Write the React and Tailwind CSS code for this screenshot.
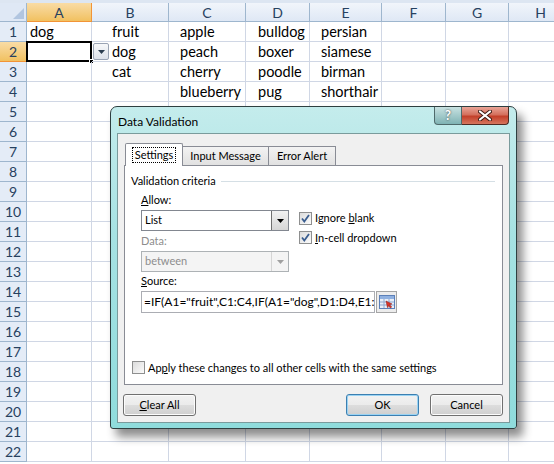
import React from "react";

const cols = [
  { label: "A", w: 65, pad: 3 },
  { label: "B", w: 77, pad: 20 },
  { label: "C", w: 77, pad: 11 },
  { label: "D", w: 64, pad: 12 },
  { label: "E", w: 72, pad: 11 },
  { label: "F", w: 64, pad: 4 },
  { label: "G", w: 63, pad: 4 },
  { label: "H", w: 64, pad: 4 },
];

const data = [
  ["dog", "fruit", "apple", "bulldog", "persian"],
  ["", "dog", "peach", "boxer", "siamese"],
  ["", "cat", "cherry", "poodle", "birman"],
  ["", "", "blueberry", "pug", "shorthair"],
];

const cellFont = { fontFamily: "Lato, 'Liberation Sans', sans-serif" };
const uiFont = { fontFamily: "Lato, 'Noto Sans', sans-serif" };

const Arrow = ({ color = "#000" }) => (
  <svg width="7" height="4" viewBox="0 0 7 4">
    <path d="M0 0h7L3.5 4z" fill={color} />
  </svg>
);

const Sheet = () => {
  const rows = Array.from({ length: 22 }, (_, i) => i + 1);
  return (
    <div className="flex flex-col w-[554px] h-[464px] overflow-hidden bg-white" style={cellFont}>
      {/* column headers */}
      <div className="flex h-[22px] shrink-0 border-t-[3px] border-[#dde6f2]">
        <div className="w-[27px] shrink-0 bg-[#dfe8f5] border-r border-b border-[#9eb6ce] flex items-end justify-end p-[2px]">
          <svg width="11" height="11" viewBox="0 0 11 11">
            <path d="M11 0V11H0z" fill="#b1c5e0" />
          </svg>
        </div>
        {cols.map((c) => (
          <div
            key={c.label}
            style={{ width: c.w }}
            className={`shrink-0 border-r border-b flex items-center justify-center text-[14px] text-[#27415f] ${
              c.label === "A"
                ? "bg-gradient-to-b from-[#f9dca5] to-[#f1c15f] border-[#f29436]"
                : "bg-gradient-to-b from-[#f1f5fb] to-[#dfe8f5] border-[#9eb6ce]"
            }`}
          >
            {c.label}
          </div>
        ))}
      </div>
      {rows.map((r) => (
        <div key={r} className="flex h-[20px] shrink-0">
          <div
            className={`w-[27px] shrink-0 border-r border-b flex items-center justify-center text-[14px] text-[#27415f] ${
              r === 2
                ? "bg-gradient-to-b from-[#f9dca5] to-[#f1c15f] border-[#f29436]"
                : "bg-[#e4ecf7] border-[#9eb6ce]"
            }`}
          >
            {r}
          </div>
          {cols.map((c, ci) => {
            const txt = data[r - 1] ? data[r - 1][ci] || "" : "";
            return (
              <div
                key={c.label}
                style={{ width: c.w, paddingLeft: c.pad }}
                className="shrink-0 border-r border-b border-[#d0d7e5] flex items-center text-[14.5px] text-black whitespace-nowrap overflow-visible relative"
              >
                {txt}
                {r === 2 && ci === 0 && (
                  <>
                    <div className="absolute left-[-1px] top-[-1px] w-[66px] h-[21px] border-2 border-black" />
                    <div className="absolute right-[-3px] bottom-[-3px] w-[5px] h-[5px] bg-black border border-white" />
                    <div className="absolute left-[66px] top-[1px] w-[16px] h-[17px] border border-[#9aa4b4] rounded-[2px] bg-gradient-to-b from-[#f7f8fa] to-[#dde2ea] flex items-center justify-center">
                      <Arrow color="#2c3e50" />
                    </div>
                  </>
                )}
              </div>
            );
          })}
        </div>
      ))}
    </div>
  );
};

const Btn = ({ children, def, className = "" }) => (
  <div
    className={`h-[22px] w-[73px] rounded-[3px] border flex items-center justify-center text-[11px] text-black ${
      def
        ? "border-[#3c7fb1] shadow-[inset_0_0_0_1px_#9ad3f3]"
        : "border-[#707070] shadow-[inset_0_0_0_1px_#fcfcfc]"
    } bg-[linear-gradient(#f2f2f2_0%,#ebebeb_50%,#dddddd_51%,#cfcfcf_100%)] ${className}`}
  >
    {children}
  </div>
);

const Check = ({ checked }) => (
  <div className="w-[13px] h-[13px] border border-[#8e8f8f] bg-gradient-to-br from-[#dcdcdc] to-[#fbfbfb] flex items-center justify-center shrink-0">
    {checked && (
      <svg width="9" height="9" viewBox="0 0 9 9">
        <path d="M1 4.5l2.3 3L8 1" stroke="#3a5d8f" strokeWidth="1.8" fill="none" />
      </svg>
    )}
  </div>
);

const Select = ({ value, disabled }) => (
  <div
    className={`w-[148px] h-[21px] border flex items-center ${
      disabled ? "border-[#adb2b5] bg-[#f4f4f4] text-[#8d8d8d]" : "border-[#828790] bg-white text-black"
    }`}
  >
    <span className="flex-1 pl-[3px]">{value}</span>
    <div
      className={`w-[17px] h-[19px] border-l flex items-center justify-center ${
        disabled ? "border-[#d5d5d5] bg-[#f4f4f4]" : "border-[#707070] bg-gradient-to-b from-[#f2f2f2] to-[#d6d6d6]"
      }`}
    >
      <Arrow color={disabled ? "#a0a0a0" : "#000"} />
    </div>
  </div>
);

const RefIcon = () => (
  <svg width="16" height="14" viewBox="0 0 16 14">
    <rect x="0.5" y="0.5" width="15" height="13" fill="#e8eef8" stroke="#5b7fb8" />
    <rect x="1" y="1" width="14" height="3" fill="#8fb0e0" />
    <path d="M1 7h14M1 10h14M5 4v9M10 4v9" stroke="#8fa8d0" strokeWidth="1" />
    <path d="M7 6l6 3-2.3.7 2 2.3-1.2 1-2-2.3-1 2z" fill="#d8342a" stroke="#8a1a12" strokeWidth="0.5" />
  </svg>
);

const Dialog = () => (
  <div
    className="absolute left-[110px] top-[106px] w-[407px] h-[323px] rounded-t-[7px] rounded-b-[3px] border border-[#2e3f40] bg-[linear-gradient(180deg,#c4ecec_0%,#a6e2e3_40%,#8fdcdc_100%)] shadow-[6px_8px_10px_rgba(0,0,0,0.45)] flex flex-col"
    style={uiFont}
  >
    {/* title bar */}
    <div className="h-[26px] flex items-start pl-[7px] pr-[7px] shrink-0">
      <span className="text-[12px] text-black mt-[6px]">Data Validation</span>
      <div className="ml-auto flex">
        <div className="w-[28px] h-[18px] border border-[#4f6a6b] border-t-0 rounded-bl-[4px] bg-gradient-to-b from-[#c8e2e2] to-[#7fb3b4] flex items-center justify-center text-[13px] font-bold text-white [text-shadow:0_0_2px_#333]">
          ?
        </div>
        <div className="w-[47px] h-[18px] border border-[#4f2a22] border-t-0 border-l-0 rounded-br-[4px] bg-[linear-gradient(#e9a598_0%,#d4705d_45%,#c3402a_55%,#d6755d_100%)] flex items-center justify-center">
          <svg width="14" height="11" viewBox="0 0 14 11">
            <path d="M2 1.5l10 8M12 1.5l-10 8" stroke="#3b1a14" strokeWidth="4" strokeLinecap="round" />
            <path d="M2 1.5l10 8M12 1.5l-10 8" stroke="#fff" strokeWidth="2.2" strokeLinecap="round" />
          </svg>
        </div>
      </div>
    </div>
    {/* client */}
    <div className="flex-1 mx-[6px] mb-[5px] border border-[#7a9b9c] bg-[#f0f0f0] text-[11px] text-black flex flex-col px-[6px]">
      {/* tabs */}
      <div className="flex items-end h-[31px] pt-[9px] ml-[1px]">
        <div className="h-[23px] w-[58px] border border-b-0 border-[#898c95] bg-white rounded-t-[2px] flex items-center justify-center relative z-10 mb-[-1px]">
          <span className="border border-dotted border-black px-[2px] leading-[14px]">Settings</span>
        </div>
        <div className="h-[19px] w-[86px] border border-l-0 border-b-0 border-[#898c95] bg-gradient-to-b from-[#f3f3f3] to-[#e1e1e1] flex items-center justify-center">
          Input Message
        </div>
        <div className="h-[19px] w-[67px] border border-l-0 border-b-0 border-[#898c95] bg-gradient-to-b from-[#f3f3f3] to-[#e1e1e1] flex items-center justify-center">
          Error Alert
        </div>
      </div>
      {/* panel */}
      <div className="h-[220px] border border-[#898c95] bg-white flex flex-col pl-[6px] pr-[7px]">
        <div className="flex items-center h-[20px] mt-[5px]">
          <span>Validation criteria</span>
          <div className="flex-1 ml-[5px] h-px bg-[#d5dfe5]" />
        </div>
        <div className="flex pl-[10px]">
          <div className="flex flex-col w-[158px]">
            <span className="mt-[1px] h-[18px]">
              <u>A</u>llow:
            </span>
            <Select value="List" />
            <span className="mt-[2px] h-[18px] text-[#8d8d8d]">Data:</span>
            <Select value="between" disabled />
          </div>
          <div className="flex flex-col pt-[19px] gap-[3px]">
            <div className="flex items-center gap-[3px]">
              <Check checked />
              <span>
                Ignore <u>b</u>lank
              </span>
            </div>
            <div className="flex items-center gap-[3px]">
              <Check checked />
              <span>
                <u>I</u>n-cell dropdown
              </span>
            </div>
          </div>
        </div>
        <span className="pl-[10px] mt-[1px] h-[18px]">
          <u>S</u>ource:
        </span>
        <div className="flex pl-[10px] items-center gap-[1px]">
          <div className="w-[234px] h-[22px] border border-[#abadb3] bg-white pl-[2px] flex items-center overflow-hidden whitespace-nowrap text-[12px]">
            =IF(A1="fruit",C1:C4,IF(A1="dog",D1:D4,E1:E4))
          </div>
          <div className="w-[21px] h-[22px] border border-[#a5a5a5] bg-[#ececec] flex items-center justify-center">
            <RefIcon />
          </div>
        </div>
        <div className="flex items-center gap-[3px] mt-auto mb-[8px] ml-[1px]">
          <Check />
          <span>
            Ap<u>p</u>ly these changes to all other cells with the same settings
          </span>
        </div>
      </div>
      {/* buttons */}
      <div className="flex mt-[9px]">
        <Btn className="ml-[-1px]">
          <span>
            <u>C</u>lear All
          </span>
        </Btn>
        <Btn def className="ml-auto">
          OK
        </Btn>
        <Btn className="ml-[11px]">Cancel</Btn>
      </div>
    </div>
  </div>
);

export default function App() {
  return (
    <div className="relative w-[554px] h-[464px] overflow-hidden">
      <Sheet />
      <Dialog />
    </div>
  );
}
